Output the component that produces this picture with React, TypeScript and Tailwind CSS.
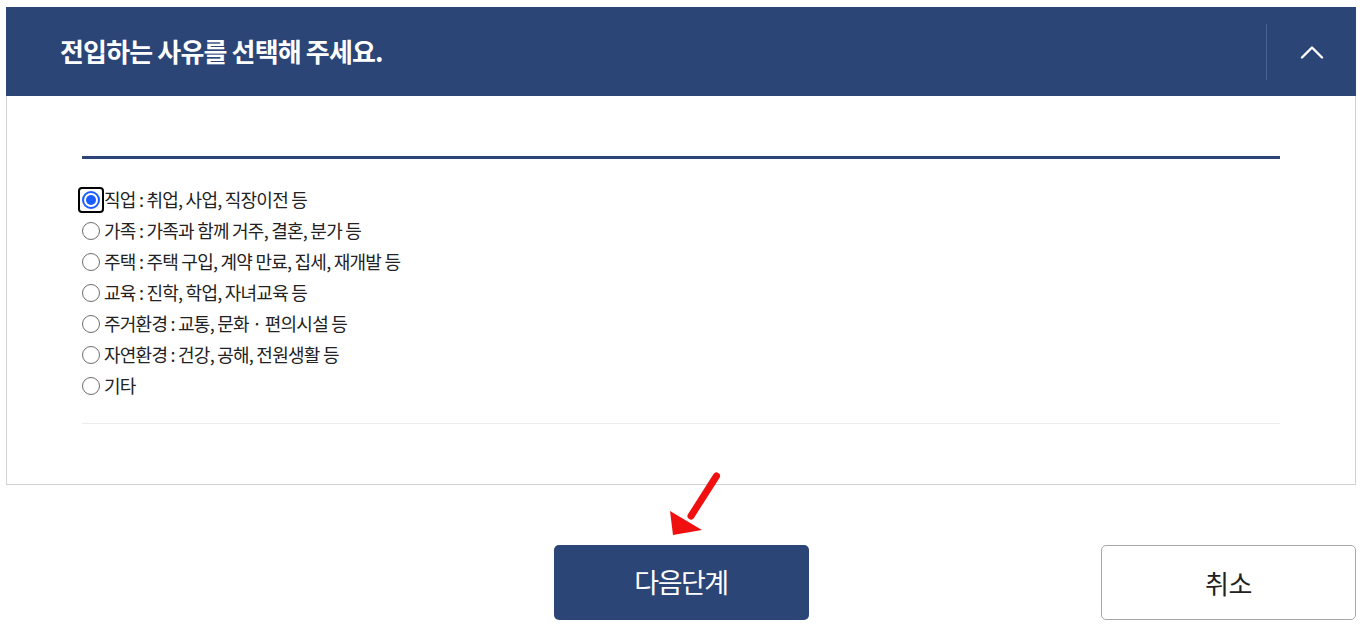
import { useState } from 'react';

const reasons = [
  '직업 : 취업, 사업, 직장이전 등',
  '가족 : 가족과 함께 거주, 결혼, 분가 등',
  '주택 : 주택 구입, 계약 만료, 집세, 재개발 등',
  '교육 : 진학, 학업, 자녀교육 등',
  '주거환경 : 교통, 문화 · 편의시설 등',
  '자연환경 : 건강, 공해, 전원생활 등',
  '기타',
];

function Radio({ checked }: { checked: boolean }) {
  return (
    <span className="relative w-[18px] h-[18px] shrink-0 flex items-center justify-center">
      {checked ? (
        <>
          <span className="absolute -inset-[4px] border-2 border-black rounded-[4px]" />
          <span className="w-[18px] h-[18px] rounded-full border-2 border-[#1a5cff] flex items-center justify-center">
            <span className="w-[10px] h-[10px] rounded-full bg-[#1a5cff]" />
          </span>
        </>
      ) : (
        <span className="w-[18px] h-[18px] rounded-full border-[1.5px] border-[#6d6d6d] bg-white" />
      )}
    </span>
  );
}

export default function App() {
  const [selected, setSelected] = useState(0);

  return (
    <div className="min-h-screen bg-white pt-[7px] pl-[6px] pr-[4px] font-['Noto_Sans_CJK_KR','Noto_Sans',sans-serif] relative">
      {/* 사유 선택 카드 */}
      <div className="border border-[#d2d2d2] border-t-0">
        <div className="h-[89px] bg-[#2b4577] flex items-center -mx-px">
          <h2 className="flex-1 pl-[54px] text-white text-[26px] font-bold tracking-[-0.85px] leading-none pb-[2px]">
            전입하는 사유를 선택해 주세요.
          </h2>
          <div className="w-px h-[56px] bg-[#4a6391]" />
          <button className="w-[89px] h-full flex items-center justify-center">
            <svg width="24" height="14" viewBox="0 0 24 14" fill="none">
              <path d="M2 12.5L12 2.5L22 12.5" stroke="white" strokeWidth="2.4" strokeLinecap="round" strokeLinejoin="round" />
            </svg>
          </button>
        </div>

        <div className="px-[75px] pt-[60px] pb-[60px]">
          <div className="h-[3px] bg-[#2b4577]" />
          <ul className="pt-[25px] pb-[22px] border-b border-[#ececec]">
            {reasons.map((r, i) => (
              <li
                key={r}
                onClick={() => setSelected(i)}
                className="h-[31px] flex items-center gap-[4px] text-[18px] text-[#222] tracking-[-0.75px] cursor-pointer"
              >
                <Radio checked={selected === i} />
                <span>{r}</span>
              </li>
            ))}
          </ul>
        </div>
      </div>

      {/* 버튼 영역 */}
      <div className="flex items-center pt-[60px]">
        <div className="flex-1" />
        <button className="w-[255px] h-[75px] rounded-[5px] bg-[#2b4577] text-white text-[27px] tracking-[-1.5px]">
          다음단계
        </button>
        <div className="flex-1 flex justify-end">
          <button className="w-[255px] h-[75px] rounded-[5px] border border-[#a8a8a8] bg-white text-[#222] text-[26px] tracking-[-0.5px]">
            취소
          </button>
        </div>
      </div>

      {/* 안내 화살표 */}
      <svg className="absolute left-[666px] top-[470px]" width="60" height="70" viewBox="0 0 60 70">
        <path d="M50.5 6L25 46" stroke="#f01010" strokeWidth="7" strokeLinecap="round" />
        <path d="M4 41L7 65L36 60Z" fill="#f01010" />
      </svg>
    </div>
  );
}
